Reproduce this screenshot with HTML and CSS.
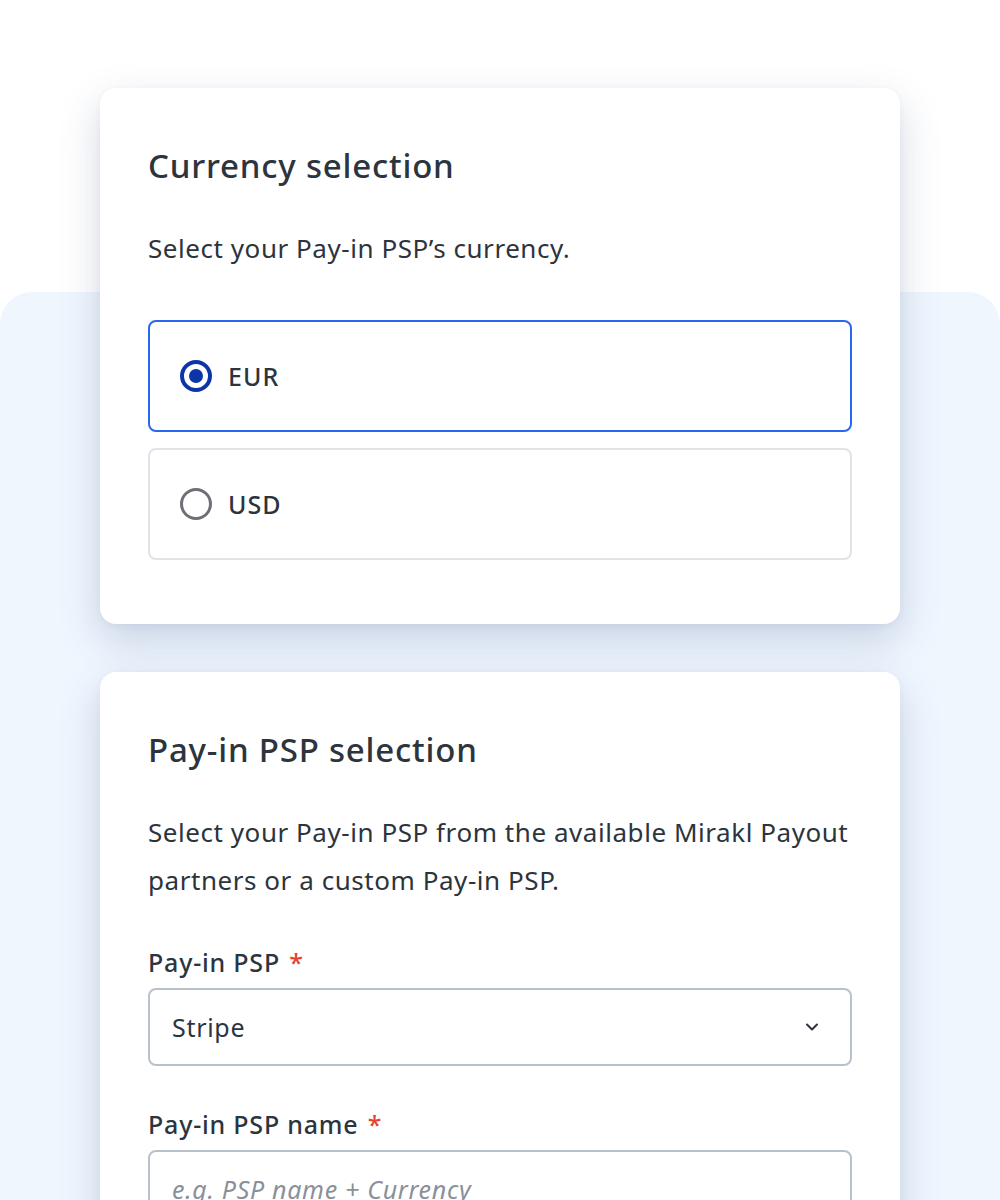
FILE: index.html
```html
<!DOCTYPE html>
<html lang="en">
<head>
<meta charset="utf-8">
<link rel="stylesheet" href="styles.css">
</head>
<body>
<div class="stage">
  <div class="panel"></div>
  <div class="cards">
    <section class="card">
      <h2 class="card-title">Currency selection</h2>
      <p class="card-desc">Select your Pay-in PSP’s currency.</p>
      <div class="options">
        <label class="option option-selected">
          <span class="radio radio-on"><span class="radio-dot"></span></span>
          <span class="option-text">EUR</span>
        </label>
        <label class="option">
          <span class="radio"></span>
          <span class="option-text">USD</span>
        </label>
      </div>
    </section>
    <section class="card card-second">
      <h2 class="card-title">Pay-in PSP selection</h2>
      <p class="card-desc">Select your Pay-in PSP from the available Mirakl Payout partners or a custom Pay-in PSP.</p>
      <div class="field">
        <div class="field-label">Pay-in PSP <span class="req">*</span></div>
        <div class="select">
          <span class="select-value">Stripe</span>
          <svg class="chevron" width="20" height="20" viewBox="0 0 20 20"><path d="M5 7.5 L10 12.5 L15 7.5" fill="none" stroke="#2b333d" stroke-width="2" stroke-linecap="round" stroke-linejoin="round"/></svg>
        </div>
      </div>
      <div class="field">
        <div class="field-label">Pay-in PSP name <span class="req">*</span></div>
        <div class="input"><span class="placeholder">e.g. PSP name + Currency</span></div>
      </div>
    </section>
  </div>
</div>
</body>
</html>
```

FILE: styles.css
```css
html, body {
  margin: 0;
  padding: 0;
  background: #ffffff;
}
body {
  width: 1000px;
  height: 1200px;
  overflow: hidden;
  font-family: "Noto Sans", "Open Sans", sans-serif;
  color: #2c343e;
}
.stage {
  position: relative;
  padding-top: 88px;
  height: 1112px;
}
.panel {
  position: absolute;
  top: 292px;
  left: 0;
  right: 0;
  height: 1100px;
  background: #eff6fe;
  border-radius: 32px;
  z-index: 0;
}
.cards {
  position: relative;
  z-index: 1;
  display: flex;
  flex-direction: column;
  align-items: center;
  gap: 48px;
}
.card {
  box-sizing: border-box;
  width: 800px;
  background: #ffffff;
  border-radius: 16px;
  padding: 56px 48px 64px;
  box-shadow: 0 16px 40px rgba(60, 80, 130, 0.22), 0 2px 6px rgba(60, 80, 130, 0.06);
}
.card-second {
  height: 700px;
}
.card-title {
  margin: 0;
  font-size: 33px;
  line-height: 44px;
  font-weight: 500;
  letter-spacing: 0.8px;
}
.card-desc {
  margin: 36px 0 0;
  font-size: 26px;
  line-height: 48px;
  font-weight: 400;
  letter-spacing: 0.55px;
}
.options {
  display: flex;
  flex-direction: column;
  gap: 16px;
  margin-top: 48px;
}
.option {
  box-sizing: border-box;
  height: 112px;
  display: flex;
  align-items: center;
  gap: 16px;
  padding: 0 30px;
  border: 2px solid #e0e4e9;
  border-radius: 8px;
}
.option-selected {
  border-color: #2a67f0;
}
.radio {
  box-sizing: border-box;
  width: 32px;
  height: 32px;
  border-radius: 50%;
  border: 3px solid #6d7177;
  display: flex;
  align-items: center;
  justify-content: center;
}
.radio-on {
  border: 4px solid #0b36a8;
}
.radio-dot {
  width: 14px;
  height: 14px;
  border-radius: 50%;
  background: #0b36a8;
}
.option-text {
  font-size: 25px;
  font-weight: 500;
  letter-spacing: 1px;
}
.field {
  margin-top: 40px;
}
.field-label {
  font-size: 25px;
  line-height: 36px;
  font-weight: 500;
  letter-spacing: 0.8px;
  margin-bottom: 8px;
}
.req {
  color: #e5432b;
  margin-left: 2px;
}
.select, .input {
  box-sizing: border-box;
  height: 78px;
  border: 2px solid #b9c2cc;
  border-radius: 8px;
  display: flex;
  align-items: center;
  padding: 0 22px;
  font-size: 25px;
  letter-spacing: 0.7px;
}
.select {
  justify-content: space-between;
}
.chevron {
  margin-right: 6px;
}
.placeholder {
  color: #8a9099;
  font-style: italic;
  white-space: nowrap;
}
```
